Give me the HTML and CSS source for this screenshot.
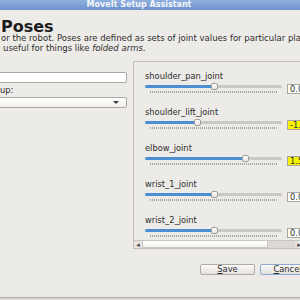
FILE: index.html
```html
<!DOCTYPE html>
<html lang="en">
<head>
    <meta charset="UTF-8">
    <meta name="viewport" content="width=device-width, initial-scale=1.0">
    <title>MoveIt Setup Assistant</title>

    <link rel="stylesheet" href="styles.css">
</head>
<body>

    <div class="titleBar">MoveIt Setup Assistant</div>

    <h1>Poses</h1>

    <div class="desc">or the robot. Poses are defined as sets of joint values for particular planning groups.</div>
    <div class="desc descTwo">useful for things like <i>folded arms</i>.</div>

    <div class="main">

        <div class="leftCol">
            <input class="field" type="text">
            <label class="lab">up:</label>
            <div class="combo"><span class="comboArrow"></span></div>
        </div>

        <div class="jointBox">
            <div class="joints">

                <div class="joint">
                    <div class="jointName">shoulder_pan_joint</div>
                    <div class="sliderRow">
                        <div class="slider">
                            <div class="track"><div class="fill" style="width: 68px"></div></div>
                            <div class="handle" style="left: 66px"></div>
                            <div class="ticks"></div>
                        </div>
                        <div class="value">0.0</div>
                    </div>
                </div>

                <div class="joint">
                    <div class="jointName">shoulder_lift_joint</div>
                    <div class="sliderRow">
                        <div class="slider">
                            <div class="track"><div class="fill" style="width: 51px"></div></div>
                            <div class="handle" style="left: 49px"></div>
                            <div class="ticks"></div>
                        </div>
                        <div class="value changed">-1.57</div>
                    </div>
                </div>

                <div class="joint">
                    <div class="jointName">elbow_joint</div>
                    <div class="sliderRow">
                        <div class="slider">
                            <div class="track"><div class="fill" style="width: 99px"></div></div>
                            <div class="handle" style="left: 97px"></div>
                            <div class="ticks"></div>
                        </div>
                        <div class="value changed">1.57</div>
                    </div>
                </div>

                <div class="joint">
                    <div class="jointName">wrist_1_joint</div>
                    <div class="sliderRow">
                        <div class="slider">
                            <div class="track"><div class="fill" style="width: 68px"></div></div>
                            <div class="handle" style="left: 66px"></div>
                            <div class="ticks"></div>
                        </div>
                        <div class="value">0.0</div>
                    </div>
                </div>

                <div class="joint">
                    <div class="jointName">wrist_2_joint</div>
                    <div class="sliderRow">
                        <div class="slider">
                            <div class="track"><div class="fill" style="width: 68px"></div></div>
                            <div class="handle" style="left: 66px"></div>
                            <div class="ticks"></div>
                        </div>
                        <div class="value">0.0</div>
                    </div>
                </div>

            </div>

            <div class="hScroll">
                <div class="scrollBtn">&#9666;</div>
                <div class="scrollThumb"></div>
                <div class="scrollTrough"></div>
                <div class="scrollBtn">&#9656;</div>
            </div>
        </div>

    </div>

    <div class="buttons">
        <div class="btn"><u>S</u>ave</div>
        <div class="btn btnFocus"><u>C</u>ancel</div>
    </div>

    <div class="bottomEdge"></div>

</body>
</html>
```

FILE: styles.css
```css
*{
    margin: 0;
    padding: 0;
    box-sizing: border-box;
}

html, body{
    width: 300px;
    height: 300px;
    overflow: hidden;
}

body{
    background-color: #edebe7;
    font-family: "DejaVu Sans", sans-serif;
    font-size: 8.3px;
    color: #2e2e2e;
}

.titleBar{
    height: 10px;
    line-height: 10px;
    padding-right: 22px;
    text-align: center;
    font-size: 8px;
    font-weight: bold;
    color: #f4f6fa;
    background: linear-gradient(#8fb0df, #6d91cb);
    white-space: nowrap;
}

h1{
    margin: 10px 0 0 1px;
    font-size: 16px;
    line-height: 13px;
    color: #1c1c1c;
}

.desc{
    margin: 0 0 0 1px;
    font-size: 8.5px;
    line-height: 10px;
    white-space: nowrap;
}

.descTwo{
    margin: 0 0 0 3px;
}

.main{
    display: flex;
    margin-top: 8px;
}

.leftCol{
    width: 131px;
    margin-left: -4px;
    padding-top: 11px;
    flex: none;
}

.field{
    display: block;
    width: 100%;
    height: 11px;
    border: 1px solid #aaa7a2;
    border-radius: 2px;
    background-color: white;
    outline: none;
}

.lab{
    display: block;
    margin: 2px 0 0 4px;
    line-height: 10px;
}

.combo{
    position: relative;
    margin-top: 2px;
    height: 11px;
    border: 1px solid #aaa7a2;
    border-radius: 2px;
    background: linear-gradient(#ffffff, #f1efec);
}

.comboArrow{
    position: absolute;
    right: 7px;
    top: 3px;
    border-left: 3px solid transparent;
    border-right: 3px solid transparent;
    border-top: 3px solid #3a3a3a;
}

.jointBox{
    display: flex;
    flex-direction: column;
    width: 180px;
    height: 188px;
    margin-left: 6px;
    flex: none;
    border: 1px solid #c2beb8;
}

.joints{
    flex: 1;
    overflow: hidden;
    padding: 9px 0 0 11px;
}

.joint{
    height: 36px;
}

.jointName{
    line-height: 10px;
    white-space: nowrap;
}

.sliderRow{
    display: flex;
    margin-top: 2px;
}

.slider{
    position: relative;
    width: 137px;
    height: 11px;
    flex: none;
}

.track{
    position: absolute;
    top: 2px;
    left: 0;
    width: 137px;
    height: 3px;
    border-radius: 2px;
    background-color: #c9c8c6;
    overflow: hidden;
}

.fill{
    height: 100%;
    background-color: #4b8fd2;
}

.handle{
    position: absolute;
    top: 0;
    width: 7px;
    height: 7px;
    border: 1px solid #a2a09c;
    border-radius: 2px;
    background: linear-gradient(#ffffff, #e6e4e1);
}

.ticks{
    position: absolute;
    top: 8px;
    left: 5px;
    width: 127px;
    height: 2px;
    background: repeating-linear-gradient(to right, #a9a7a3 0 1px, transparent 1px 2px);
}

.value{
    margin: 1px 0 0 5px;
    width: 30px;
    height: 10px;
    line-height: 8px;
    padding-left: 2px;
    border: 1px solid #aaa7a2;
    background-color: white;
    white-space: nowrap;
}

.changed{
    background-color: #f6f200;
}

.hScroll{
    display: flex;
    height: 8px;
    flex: none;
}

.scrollBtn{
    width: 8px;
    font-size: 7px;
    line-height: 8px;
    text-align: center;
    color: #444;
    background-color: #e7e4e0;
    border-top: 1px solid #c9c6c1;
}

.scrollThumb{
    width: 126px;
    border: 1px solid #c9c6c1;
    background: linear-gradient(#ffffff, #f4f2ef);
}

.scrollTrough{
    width: 27px;
    background-color: #dcd9d4;
    border-top: 1px solid #c9c6c1;
}

.buttons{
    display: flex;
    gap: 5px;
    margin-top: 15px;
    padding-left: 200px;
}

.btn{
    width: 55px;
    height: 11px;
    flex: none;
    line-height: 9px;
    text-align: center;
    border: 1px solid #aeaba6;
    border-radius: 2px;
    background: linear-gradient(#fbfaf9, #e4e1dd);
    white-space: nowrap;
}

.btnFocus{
    border-color: #8ea9cf;
}

.bottomEdge{
    margin-top: 22px;
    height: 3px;
    border-top: 1px solid #b3b0ab;
    background-color: #d9d6d2;
}
```
